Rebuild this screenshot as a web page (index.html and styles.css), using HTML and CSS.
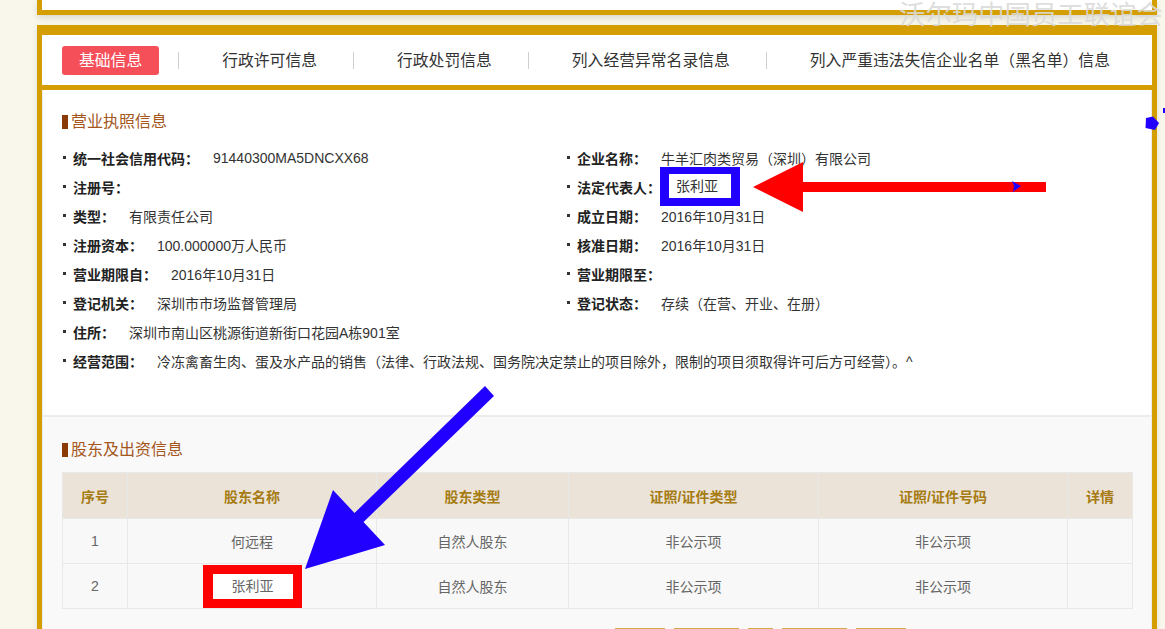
FILE: index.html
```html
<!DOCTYPE html>
<html lang="zh-CN">

<head>
    <meta charset="UTF-8">
    <meta name="viewport" content="width=device-width, initial-scale=1.0">
    <title>企业信用信息公示</title>
    <link rel="stylesheet" href="styles.css">
</head>

<body>

    <div class="page">
        <!-- Kartu atas (terpotong) -->
        <div class="top-card"></div>

        <div class="detail-card">
            <ul class="tabs">
                <li><a class="active" href="#">基础信息</a></li>
                <li><a href="#">行政许可信息</a></li>
                <li><a href="#">行政处罚信息</a></li>
                <li><a href="#">列入经营异常名录信息</a></li>
                <li><a href="#">列入严重违法失信企业名单（黑名单）信息</a></li>
            </ul>

            <div class="detail-body">
                <!-- 营业执照信息 -->
                <div class="section section-license">
                    <h3 class="section-title">营业执照信息</h3>
                    <ul class="info-list">
                        <li><b>统一社会信用代码：</b><span>91440300MA5DNCXX68</span></li>
                        <li><b>企业名称：</b><span>牛羊汇肉类贸易（深圳）有限公司</span></li>
                        <li><b>注册号：</b></li>
                        <li><b>法定代表人：</b><span class="mark-blue">张利亚</span></li>
                        <li><b>类型：</b><span>有限责任公司</span></li>
                        <li><b>成立日期：</b><span>2016年10月31日</span></li>
                        <li><b>注册资本：</b><span>100.000000万人民币</span></li>
                        <li><b>核准日期：</b><span>2016年10月31日</span></li>
                        <li><b>营业期限自：</b><span>2016年10月31日</span></li>
                        <li><b>营业期限至：</b></li>
                        <li><b>登记机关：</b><span>深圳市市场监督管理局</span></li>
                        <li><b>登记状态：</b><span>存续（在营、开业、在册）</span></li>
                        <li class="full"><b>住所：</b><span>深圳市南山区桃源街道新街口花园A栋901室</span></li>
                        <li class="full"><b>经营范围：</b><span>冷冻禽畜生肉、蛋及水产品的销售（法律、行政法规、国务院决定禁止的项目除外，限制的项目须取得许可后方可经营）。^</span></li>
                    </ul>
                </div>

                <!-- 股东及出资信息 -->
                <div class="section section-holder">
                    <h3 class="section-title">股东及出资信息</h3>
                    <table class="holder-table">
                        <colgroup>
                            <col style="width: 65px">
                            <col style="width: 249px">
                            <col style="width: 192px">
                            <col style="width: 250px">
                            <col style="width: 249px">
                            <col style="width: 65px">
                        </colgroup>
                        <thead>
                            <tr>
                                <th>序号</th>
                                <th>股东名称</th>
                                <th>股东类型</th>
                                <th>证照/证件类型</th>
                                <th>证照/证件号码</th>
                                <th>详情</th>
                            </tr>
                        </thead>
                        <tbody>
                            <tr>
                                <td>1</td>
                                <td>何远程</td>
                                <td>自然人股东</td>
                                <td>非公示项</td>
                                <td>非公示项</td>
                                <td></td>
                            </tr>
                            <tr>
                                <td>2</td>
                                <td><span class="mark-red">张利亚</span></td>
                                <td>自然人股东</td>
                                <td>非公示项</td>
                                <td>非公示项</td>
                                <td></td>
                            </tr>
                        </tbody>
                    </table>
                    <div class="pager">
                        <a class="pg-w1" href="#" aria-label="首页"></a>
                        <a class="pg-w2" href="#" aria-label="上一页"></a>
                        <a class="pg-cur" href="#" aria-label="1"></a>
                        <a class="pg-w2" href="#" aria-label="下一页"></a>
                        <a class="pg-w1" href="#" aria-label="末页"></a>
                    </div>
                </div>
            </div>
        </div>
    </div>

    <div class="watermark">沃尔玛中国员工联谊会</div>

    <!-- Anotasi panah -->
    <svg class="marks" width="1165" height="629" viewBox="0 0 1165 629">
        <polygon fill="#ff0000" points="753,187 803,162 803,182 1046,182 1046,192 803,192 803,212"/>
        <polygon fill="#2200ff" points="1012,181 1021,186 1013,192 1014,186"/>
        <polygon fill="#2200ff" points="485,386 494,396 363.5,522 385,545 305,569 333,490 354.5,513"/>
        <polygon fill="#2200ff" points="1146,118 1153,116.5 1159,123 1155,130 1145.5,128"/>
        <rect fill="#2200ff" x="1163" y="108" width="2" height="5"/>
    </svg>

</body>

</html>
```

FILE: styles.css
```css
/* Dasar halaman */
body {
    margin: 0;
    background-color: #f9f7eb;
    font-family: "Liberation Sans", "Noto Sans CJK SC", sans-serif;
    color: #333;
    overflow: hidden;
}

.page {
    width: 1120px;
    margin-left: 37px;
}

/* Kartu atas */
.top-card {
    height: 10px;
    background-color: #fff;
    border: 5px solid #d49e00;
    border-top: none;
    box-shadow: 0 3px 6px rgba(0, 0, 0, 0.12);
}

/* Kartu detail */
.detail-card {
    margin-top: 10px;
    border: 5px solid #d49e00;
    border-top-width: 10px;
    border-bottom: none;
    box-shadow: 0 3px 6px rgba(0, 0, 0, 0.1);
}

/* Tab */
.tabs {
    display: flex;
    align-items: center;
    height: 50px;
    margin: 0;
    padding: 0 0 0 20px;
    list-style: none;
    background-color: #fff;
    border-bottom: 5px solid #d49e00;
    white-space: nowrap;
}

.tabs li {
    display: flex;
    flex: none;
    align-items: center;
    margin-right: 19px;
}

.tabs li + li::before {
    content: "";
    width: 1px;
    height: 17px;
    background-color: #cfcfcf;
    margin-right: 26px;
}

.tabs a {
    display: block;
    padding: 0 17px;
    line-height: 29px;
    font-size: 15.8px;
    color: #333;
    text-decoration: none;
    border-radius: 3px;
}

.tabs a.active {
    background-color: #f5505a;
    color: #fff;
}

/* Isi */
.detail-body {
    border-left: 1px solid #ececec;
    border-right: 1px solid #ececec;
}

.section {
    padding: 20px 19px 40px;
}

.section-license {
    background-color: #fff;
    border-bottom: 2px solid #ececec;
}

.section-holder {
    padding-top: 21px;
    padding-bottom: 40px;
    background-color: #f9f9f9;
}

.section-title {
    display: flex;
    align-items: center;
    margin: 0;
    line-height: 24px;
    font-size: 16px;
    font-weight: normal;
    color: #a4561c;
}

.section-title::before {
    content: "";
    width: 6px;
    height: 14px;
    margin-right: 3px;
    background-color: #8a3b04;
}

/* Daftar info */
.info-list {
    display: grid;
    grid-template-columns: 504px 1fr;
    margin: 9px 0 0;
    padding: 0;
    list-style: none;
}

.info-list li {
    display: flex;
    align-items: center;
    height: 29px;
    font-size: 14px;
    white-space: nowrap;
}

.info-list li::before {
    content: "";
    flex: none;
    width: 3px;
    height: 3px;
    margin: 0 7px 0 1px;
    background-color: #333;
}

.info-list li.full {
    grid-column: 1 / -1;
}

.info-list b {
    color: #222;
}

.info-list span {
    margin-left: 14px;
    color: #333;
}

.info-list .mark-blue {
    margin-left: -1px;
    padding: 1px 13px 1px 7px;
    line-height: 22px;
    border: 9px solid #2200ff;
    border-top-width: 7px;
    border-bottom-width: 8px;
    background-color: #fff;
}

/* Tabel pemegang saham */
.holder-table {
    width: 1070px;
    margin-top: 10px;
    border-collapse: collapse;
    table-layout: fixed;
    font-size: 14px;
}

.holder-table th,
.holder-table td {
    padding: 0;
    border: 1px solid #e8e8e8;
    text-align: center;
}

.holder-table th {
    height: 45px;
    background-color: #ebe3d8;
    color: #a57b12;
    font-weight: bold;
}

.holder-table td {
    height: 44px;
    background-color: #f8f8f8;
    color: #666;
}

.mark-red {
    display: inline-block;
    padding: 0 19px;
    line-height: 25px;
    border: 9px solid #ff0000;
    border-left-width: 10px;
    background-color: #fff;
    vertical-align: middle;
}

/* Paginasi */
.pager {
    display: flex;
    gap: 9px;
    margin-top: 19px;
    padding-left: 553px;
}

.pager a {
    height: 24px;
    border: 1px solid #d4a94e;
}

.pager .pg-w1 {
    width: 48px;
}

.pager .pg-w2 {
    width: 63px;
}

.pager .pg-cur {
    width: 23px;
    background-color: #d4a94e;
}

/* Tanda air & anotasi */
.watermark {
    position: absolute;
    top: -1px;
    left: 899px;
    font-family: "Noto Sans CJK SC", sans-serif;
    font-size: 26.4px;
    line-height: 28px;
    color: rgba(218, 218, 218, 0.9);
    white-space: nowrap;
}

.marks {
    position: absolute;
    top: 0;
    left: 0;
    pointer-events: none;
}
```
